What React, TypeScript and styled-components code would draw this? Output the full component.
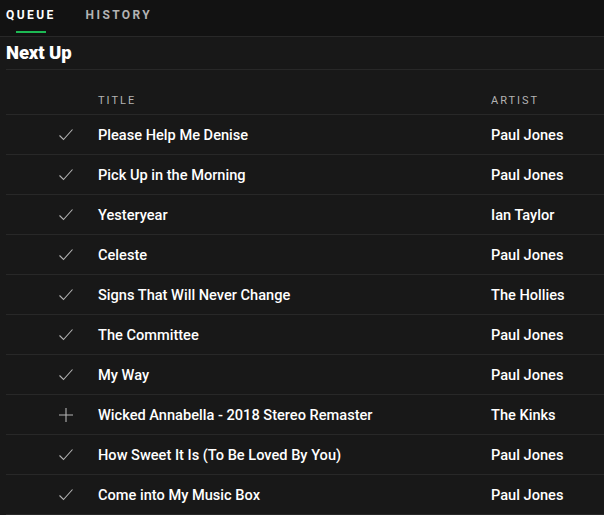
import React from "react";
import styled, { createGlobalStyle } from "styled-components";

const Global = createGlobalStyle`
  html, body { margin: 0; padding: 0; background: #181818; }
  body { font-family: "Roboto", "Liberation Sans", sans-serif; color: #fff; }
`;

const Page = styled.div`
  width: 604px;
  height: 515px;
  background: #181818;
  overflow: hidden;
`;

const TabBar = styled.div`
  height: 37px;
  background: #121212;
  border-bottom: 1px solid #282828;
  display: flex;
  gap: 30px;
  padding-left: 6px;
  box-sizing: border-box;
`;

const Tab = styled.div<{ $active?: boolean }>`
  position: relative;
  height: 100%;
  display: flex;
  align-items: center;
  padding-bottom: 7px;
  box-sizing: border-box;
  font-size: 12px;
  font-weight: 700;
  letter-spacing: 2.4px;
  color: ${(p) => (p.$active ? "#fff" : "#b3b3b3")};
  &::after {
    content: "";
    display: ${(p) => (p.$active ? "block" : "none")};
    position: absolute;
    left: 10px;
    width: 30px;
    bottom: 3px;
    height: 2px;
    background: #1db954;
  }
`;

const Content = styled.div`
  padding-left: 6px;
`;

const Heading = styled.div`
  height: 33px;
  box-sizing: border-box;
  display: flex;
  align-items: center;
  font-size: 18.5px;
  font-weight: 900;
  letter-spacing: -0.1px;
  border-bottom: 1px solid #282828;
`;

const Grid = styled.div`
  display: grid;
  grid-template-columns: 92px 393px 1fr;
`;

const HeadRow = styled.div`
  display: contents;
`;

const HeadCell = styled.div`
  height: 45px;
  padding-top: 17px;
  box-sizing: border-box;
  border-bottom: 1px solid #282828;
  font-size: 11px;
  letter-spacing: 2px;
  color: #b3b3b3;
  display: flex;
  align-items: center;
`;

const Cell = styled.div`
  height: 40px;
  box-sizing: border-box;
  display: flex;
  align-items: center;
  border-bottom: 1px solid #282828;
  font-size: 14.6px;
  font-weight: 500;
  color: #fff;
  white-space: nowrap;
`;

const IconCell = styled(Cell)`
  justify-content: flex-end;
  padding-right: 24px;
`;

const Check = () => (
  <svg width="16" height="16" viewBox="0 0 16 16" fill="none">
    <path d="M1.5 8.5 L5.5 12.5 L14.5 2.5" stroke="#b3b3b3" strokeWidth="1.1" />
  </svg>
);

const Plus = () => (
  <svg width="16" height="16" viewBox="0 0 16 16" fill="none">
    <path d="M8 1 V15 M1 8 H15" stroke="#b3b3b3" strokeWidth="1.1" />
  </svg>
);

const tracks: [string, string, boolean][] = [
  ["Please Help Me Denise", "Paul Jones", true],
  ["Pick Up in the Morning", "Paul Jones", true],
  ["Yesteryear", "Ian Taylor", true],
  ["Celeste", "Paul Jones", true],
  ["Signs That Will Never Change", "The Hollies", true],
  ["The Committee", "Paul Jones", true],
  ["My Way", "Paul Jones", true],
  ["Wicked Annabella - 2018 Stereo Remaster", "The Kinks", false],
  ["How Sweet It Is (To Be Loved By You)", "Paul Jones", true],
  ["Come into My Music Box", "Paul Jones", true],
];

export default function App() {
  return (
    <Page>
      <Global />
      <TabBar>
        <Tab $active>QUEUE</Tab>
        <Tab>HISTORY</Tab>
      </TabBar>
      <Content>
        <Heading>Next Up</Heading>
        <Grid>
          <HeadRow>
            <HeadCell />
            <HeadCell>TITLE</HeadCell>
            <HeadCell>ARTIST</HeadCell>
          </HeadRow>
          {tracks.map(([t, a, added]) => (
            <React.Fragment key={t}>
              <IconCell>{added ? <Check /> : <Plus />}</IconCell>
              <Cell>{t}</Cell>
              <Cell>{a}</Cell>
            </React.Fragment>
          ))}
        </Grid>
      </Content>
    </Page>
  );
}
